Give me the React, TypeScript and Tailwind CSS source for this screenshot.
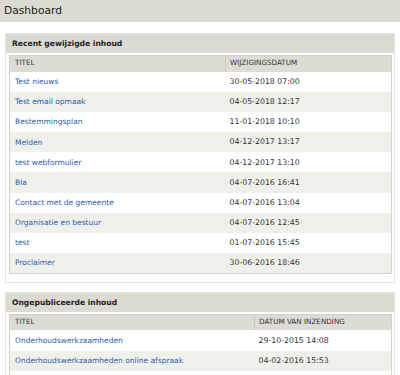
const recent = [
  { title: 'Test nieuws', date: '30-05-2018 07:00' },
  { title: 'Test email opmaak', date: '04-05-2018 12:17' },
  { title: 'Bestemmingsplan', date: '11-01-2018 10:10' },
  { title: 'Melden', date: '04-12-2017 13:17' },
  { title: 'test webformulier', date: '04-12-2017 13:10' },
  { title: 'Bla', date: '04-07-2016 16:41' },
  { title: 'Contact met de gemeente', date: '04-07-2016 13:04' },
  { title: 'Organisatie en bestuur', date: '04-07-2016 12:45' },
  { title: 'test', date: '01-07-2016 15:45' },
  { title: 'Proclaimer', date: '30-06-2016 18:46' },
];

const unpublished = [
  { title: 'Onderhoudswerkzaamheden', date: '29-10-2015 14:08' },
  { title: 'Onderhoudswerkzaamheden online afspraak', date: '04-02-2016 15:53' },
  { title: '', date: '' },
];

type Row = { title: string; date: string };

function Panel({
  heading,
  dateLabel,
  rows,
  firstCol,
}: {
  heading: string;
  dateLabel: string;
  rows: Row[];
  firstCol: string;
}) {
  return (
    <section className="mx-[5px] border border-[#e4e4e0] bg-white pb-[8px]">
      <h2 className="h-[19px] bg-[#dbdbd3] pl-[6px] text-[7.6px] font-bold leading-[19px] text-[#222]">
        {heading}
      </h2>
      <table className="ml-[3px] mr-[2px] mt-[2px] w-[383px] border-collapse border border-[#d2d2ca]">
        <thead>
          <tr className="h-[16px] bg-[#dcdcd4] text-left text-[7.2px] text-[#333]">
            <th className={`${firstCol} border-r border-[#c8c8c0] pl-[5px] font-normal`}>TITEL</th>
            <th className="pl-[4px] font-normal">{dateLabel}</th>
          </tr>
        </thead>
        <tbody>
          {rows.map((r, i) => (
            <tr key={i} className={`h-[20.2px] ${i % 2 ? 'bg-[#f0f0ea]' : 'bg-white'}`}>
              <td className="pl-[5px] text-[7.5px] text-[#2d5bb5]">{r.title}</td>
              <td className="pl-[4px] text-[7.8px] text-[#333]">{r.date}</td>
            </tr>
          ))}
        </tbody>
      </table>
    </section>
  );
}

export default function App() {
  return (
    <main className="h-[375px] w-[400px] overflow-hidden bg-white" style={{ fontFamily: '"DejaVu Sans", Verdana, sans-serif' }}>
      <h1 className="h-[22px] bg-[#dbdbd3] pl-[4px] text-[10.7px] leading-[22px] text-[#222]">Dashboard</h1>
      <div className="mt-[11px] flex flex-col gap-[9px]">
        <Panel heading="Recent gewijzigde inhoud" dateLabel="WIJZIGINGSDATUM" rows={recent} firstCol="w-[216px]" />
        <Panel heading="Ongepubliceerde inhoud" dateLabel="DATUM VAN INZENDING" rows={unpublished} firstCol="w-[245px]" />
      </div>
    </main>
  );
}
